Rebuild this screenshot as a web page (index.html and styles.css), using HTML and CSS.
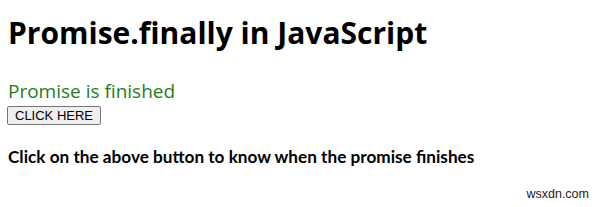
FILE: index.html
```html
<!DOCTYPE html>
<html lang="en">
<head>
    <meta charset="UTF-8">
    <title>Promise.finally in JavaScript</title>
    <link rel="stylesheet" href="styles.css">
</head>
<body>

    <h1>Promise.finally in JavaScript</h1>

    <div class="result">Promise is finished</div>
    <button class="btn">CLICK HERE</button>

    <h3>Click on the above button to know when the promise finishes</h3>

    <div class="watermark">wsxdn.com</div>

</body>
</html>
```

FILE: styles.css
```css
body {
    font-family: "Open Sans", sans-serif;
    margin: 0;
    padding: 0 8px;
    background-color: #fff;
    color: #000;
}
h1 {
    font-size: 30px;
    font-weight: bold;
    line-height: 40px;
    margin: 13px 0 26px 0;
}
.result {
    font-size: 19px;
    line-height: 24px;
    color: #1e7d1e;
}
.btn {
    display: block;
    font-family: "Liberation Sans", Arial, sans-serif;
    font-size: 13px;
    line-height: 15px;
    padding: 1px 7px;
    margin: 3px 0 0 -1px;
    background-color: #efefef;
    border: 1px solid #767676;
    border-radius: 2px;
    color: #000;
}
h3 {
    font-family: Lato, sans-serif;
    font-size: 17.2px;
    font-weight: bold;
    line-height: 24px;
    margin: 20px 0 0 0;
}
.watermark {
    font-family: "Liberation Sans", Arial, sans-serif;
    font-size: 12.5px;
    line-height: 16px;
    color: #222;
    text-align: right;
    margin: 17px 3px 0 0;
}
```
